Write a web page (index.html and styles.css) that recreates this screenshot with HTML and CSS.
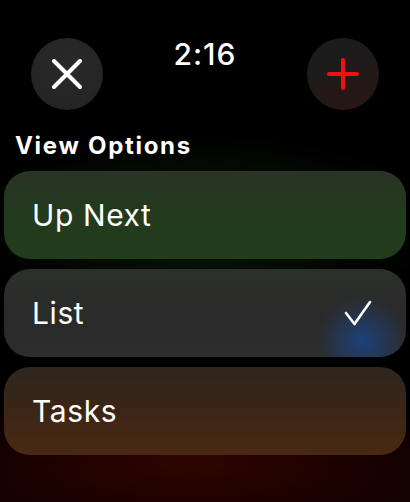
FILE: index.html
```html
<!DOCTYPE html>
<html>
<head>
  <title>View Options</title>
  <link rel="stylesheet" href="styles.css">
</head>
<body>
  <div class="screen">
    <div class="topbar">
      <button class="round-btn close-btn" type="button">
        <svg width="30" height="30" viewBox="0 0 30 30">
          <path d="M2 2 L28 28 M28 2 L2 28" stroke="#fff" stroke-width="4" stroke-linecap="round" fill="none"/>
        </svg>
      </button>
      <div class="time">2:16</div>
      <button class="round-btn add-btn" type="button">
        <svg width="32" height="32" viewBox="0 0 32 32">
          <path d="M16 2 V30 M2 16 H30" stroke="#f01010" stroke-width="4" stroke-linecap="round" fill="none"/>
        </svg>
      </button>
    </div>

    <h2 class="section-title">View Options</h2>

    <div class="options">
      <div class="option option-green">Up Next</div>
      <div class="option option-gray">
        <span>List</span>
        <svg class="check" width="30" height="28" viewBox="0 0 30 28">
          <path d="M3 14 L11.5 25 L27 3" stroke="#fff" stroke-width="2.6" stroke-linecap="round" stroke-linejoin="round" fill="none"/>
        </svg>
      </div>
      <div class="option option-orange">Tasks</div>
    </div>
  </div>
</body>
</html>
```

FILE: styles.css
```css
html {
  font-family: 'Inter', 'Noto Sans', sans-serif;
}

body {
  margin: 0;
  background: #000;
  color: #fff;
}

.screen {
  width: 410px;
  height: 502px;
  overflow: hidden;
  background:
    radial-gradient(ellipse 320px 80px at 190px 462px, rgba(50, 4, 0, 0.95), rgba(20, 0, 0, 0) 100%),
    radial-gradient(ellipse 240px 90px at 200px 225px, rgba(20, 55, 12, 0.5), rgba(0, 0, 0, 0) 100%),
    linear-gradient(180deg, #000 0%, #000 85%, #0d0100 100%);
}

.topbar {
  display: flex;
  align-items: flex-start;
  padding: 38px 31px 0 31px;
  height: 72px;
}

.round-btn {
  width: 72px;
  height: 72px;
  border-radius: 50%;
  border: none;
  padding: 0;
  display: flex;
  align-items: center;
  justify-content: center;
  flex-shrink: 0;
}

.close-btn {
  background: radial-gradient(circle at 50% 40%, #2a2a2a, #222 100%);
}

.add-btn {
  background: linear-gradient(160deg, #1c1c1c 30%, #2a1513 100%);
}

.time {
  flex: 1;
  text-align: center;
  font-size: 30px;
  font-weight: 500;
  line-height: 1;
  margin-top: 1px;
  letter-spacing: 1px;
}

.section-title {
  margin: 0;
  padding: 22px 0 0 15px;
  font-size: 24px;
  font-weight: 700;
  line-height: 28px;
  letter-spacing: 1.7px;
}

.options {
  display: flex;
  flex-direction: column;
  gap: 10px;
  padding: 11px 4px 0 4px;
}

.option {
  height: 88px;
  border-radius: 26px;
  display: flex;
  align-items: center;
  justify-content: space-between;
  padding: 0 33px 0 28px;
  font-size: 30px;
  font-weight: 400;
  letter-spacing: 0.6px;
}

.option-green {
  background: linear-gradient(180deg, #2a3327 0%, #233a1e 45%, #213c1b 100%);
}

.option-gray {
  background:
    radial-gradient(ellipse 45px 45px at 358px 72px, rgba(25, 70, 140, 0.8), rgba(25, 70, 140, 0) 100%),
    linear-gradient(180deg, #2c2f2b 0%, #2a2a2a 60%, #2d2d2d 100%);
}

.option-orange {
  background: linear-gradient(180deg, #2d2620 0%, #3c2516 50%, #4a2913 100%);
}

.check {
  display: block;
}
```
